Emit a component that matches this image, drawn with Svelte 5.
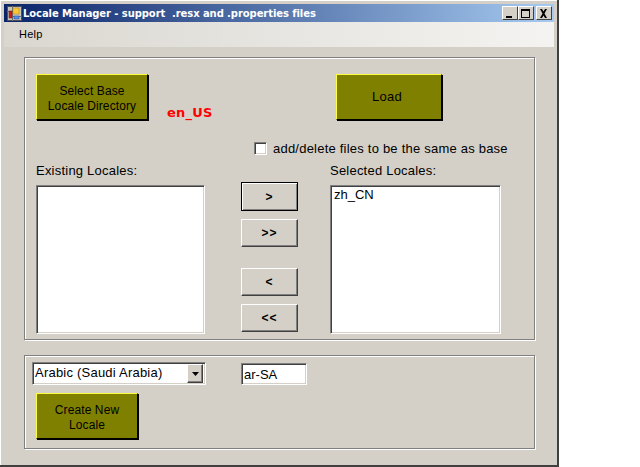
<script lang="ts">
  const title = "Locale Manager - support  .resx and .properties files";
</script>

<div class="page">
  <div class="window">
    <div class="titlebar">
      <svg class="app-icon" width="15" height="15" viewBox="0 0 15 15" aria-hidden="true">
        <rect x="0.5" y="0.5" width="14" height="14" fill="#c8c4b8" stroke="#505050" />
        <path d="M0 5.500h5M5.500 0v15M5.500 10.500h9" stroke="#707070" />
        <rect x="2" y="5" width="3" height="7" fill="#c82018" stroke="#701010" stroke-width="0.5" />
        <rect x="6" y="2" width="6" height="6" fill="#f8c838" stroke="#a88010" stroke-width="0.5" />
        <rect x="7" y="10" width="5" height="3" fill="#5890e8" stroke="#204890" stroke-width="0.5" />
      </svg>
      <span class="title">{title}</span>
      <div class="caption-buttons">
        <button class="caption" aria-label="Minimize">
          <svg width="10" height="9" viewBox="0 0 10 9"><rect x="1" y="7" width="6" height="2" fill="#000" /></svg>
        </button>
        <button class="caption" aria-label="Maximize">
          <svg width="10" height="9" viewBox="0 0 10 9"><path d="M0 0h9v9H0zM1 2v6h7V2z" fill="#000" fill-rule="evenodd" /></svg>
        </button>
        <button class="caption close" aria-label="Close">
          <svg width="10" height="9" viewBox="0 0 10 9"><path d="M1 0h2l1.500 2.500L6 0h2L5.500 4.500 8 9H6L4.500 6.500 3 9H1l2.500-4.500z" fill="#000" /></svg>
        </button>
      </div>
    </div>

    <div class="menubar"><span>Help</span></div>

    <div class="body">
      <section class="group main">
        <div class="top-row">
          <div class="base">
            <button class="olive select">Select Base<br />Locale Directory</button>
            <span class="base-locale">en_US</span>
          </div>
          <button class="olive load">Load</button>
        </div>

        <label class="sync">
          <span class="check sunken"></span>
          add/delete files to be the same as base
        </label>

        <div class="lists">
          <div class="col left">
            <div class="cap">Existing Locales:</div>
            <div class="listbox sunken"></div>
          </div>
          <div class="moves">
            <button class="move first"><span>&gt;</span></button>
            <button class="move"><span>&gt;&gt;</span></button>
            <button class="move gap"><span>&lt;</span></button>
            <button class="move"><span>&lt;&lt;</span></button>
          </div>
          <div class="col right">
            <div class="cap">Selected Locales:</div>
            <div class="listbox sunken"><div class="item">zh_CN</div></div>
          </div>
        </div>
      </section>

      <section class="group create">
        <div class="create-row">
          <div class="combo sunken">
            <span class="combo-value">Arabic (Saudi Arabia)</span>
            <span class="combo-arrow">
              <svg width="7" height="4" viewBox="0 0 7 4"><path d="M0 0h7L3.500 4z" fill="#000" /></svg>
            </span>
          </div>
          <div class="code sunken">ar-SA</div>
        </div>
        <button class="olive new">Create New<br />Locale</button>
      </section>
    </div>
  </div>
</div>

<style>
  :global(body) {
    margin: 0;
    background: #fff;
  }

  .page {
    width: 640px;
    height: 467px;
    overflow: hidden;
    font-family: "Liberation Sans", Arial, sans-serif;
    font-size: 13px;
    letter-spacing: 0.22px;
    color: #000;
  }

  .window {
    box-sizing: border-box;
    width: 559px;
    height: 467px;
    padding: 4px 3px 0 4px;
    background: #d4d0c8;
    border-right: 2px solid #404040;
    border-bottom: 2px solid #404040;
    box-shadow: inset 1px 1px 0 #fff;
    display: flex;
    flex-direction: column;
  }

  .titlebar {
    height: 18px;
    flex-shrink: 0;
    display: flex;
    align-items: center;
    background: linear-gradient(to right, #0a246a, #a6caf0);
    color: #fff;
  }

  .app-icon {
    margin: 0 1px 0 3px;
    flex-shrink: 0;
  }

  .title {
    white-space: pre;
    font-family: "DejaVu Sans", sans-serif;
    font-weight: bold;
    font-size: 10px;
    letter-spacing: -0.08px;
  }

  .caption-buttons {
    margin-left: auto;
    margin-right: 2px;
    display: flex;
  }

  .caption {
    width: 16px;
    height: 14px;
    padding: 0;
    display: flex;
    align-items: center;
    justify-content: center;
    background: #d4d0c8;
    border: 1px solid;
    border-color: #fff #404040 #404040 #fff;
  }

  .caption.close {
    margin-left: 2px;
  }

  .menubar {
    height: 25px;
    flex-shrink: 0;
    box-sizing: border-box;
    padding: 6px 0 0 15px;
    font-size: 11px;
    background: linear-gradient(to right, #dad7d0, #f4f3f1);
  }

  .body {
    padding: 10px 0 0 20px;
  }

  .group {
    box-sizing: border-box;
    width: 511px;
    border: 1px solid #808080;
    box-shadow: 1px 1px 0 #fff, inset 1px 1px 0 #fff;
    padding-left: 11px;
  }

  .main {
    height: 283px;
    padding-top: 16px;
  }

  .create {
    height: 94px;
    margin-top: 15px;
    padding-top: 6px;
    padding-left: 7px;
  }

  .sunken {
    box-sizing: border-box;
    background: #fff;
    border: 1px solid;
    border-color: #808080 #fff #fff #808080;
    box-shadow: inset 1px 1px 0 #404040, inset -1px -1px 0 #d4d0c8;
  }

  .top-row {
    display: flex;
    height: 46px;
  }

  .base {
    width: 300px;
    display: flex;
    align-items: flex-end;
  }

  .base-locale {
    margin-left: 19px;
    color: #f00;
    font-weight: bold;
    font-family: "DejaVu Sans", sans-serif;
    font-size: 13px;
    letter-spacing: 0.2px;
    line-height: 14px;
  }

  .olive {
    box-sizing: border-box;
    padding: 2px 0 0;
    font: inherit;
    font-size: 12px;
    line-height: 15px;
    letter-spacing: 0.1px;
    color: #000;
    background: #808000;
    border: 1px solid;
    border-color: #ffff40 #000 #000 #ffff40;
    box-shadow: 1px 1px 0 #000;
  }

  .select {
    width: 112px;
    height: 46px;
    padding-top: 4px;
    flex-shrink: 0;
  }

  .load {
    width: 106px;
    height: 46px;
    padding: 0 4px 2px 0;
    font-size: 13px;
    letter-spacing: 0.3px;
  }

  .sync {
    display: flex;
    align-items: center;
    height: 16px;
    margin: 20px 0 0 218px;
    white-space: nowrap;
  }

  .check {
    width: 13px;
    height: 13px;
    margin-right: 6px;
  }

  .lists {
    display: flex;
    margin-top: 7px;
  }

  .col {
    display: flex;
    flex-direction: column;
  }

  .col.left {
    width: 169px;
  }

  .col.right {
    width: 171px;
  }

  .cap {
    height: 15px;
    line-height: 15px;
    margin-bottom: 7px;
  }

  .listbox {
    height: 149px;
  }

  .item {
    padding: 1px 0 0 3px;
    font-size: 13px;
    letter-spacing: 0;
    line-height: 15px;
  }

  .moves {
    width: 57px;
    margin: 19px 32px 0 36px;
    display: flex;
    flex-direction: column;
    gap: 8px;
  }

  .move {
    box-sizing: border-box;
    height: 28px;
    padding: 0;
    font-family: "Liberation Sans", Arial, sans-serif;
    font-weight: bold;
    font-size: 12px;
    letter-spacing: 1px;
    color: #000;
    background: #d4d0c8;
    border: 1px solid;
    border-color: #fff #404040 #404040 #fff;
    box-shadow: inset -1px -1px 0 #808080;
  }

  .move.first {
    height: 29px;
    border-color: #000;
    box-shadow: inset 1px 1px 0 #fff, inset -1px -1px 0 #808080;
  }

  .move.gap {
    margin-top: 13px;
  }

  .create-row {
    display: flex;
    align-items: flex-start;
  }

  .combo {
    width: 174px;
    height: 23px;
    display: flex;
    align-items: center;
    padding: 2px;
  }

  .combo-value {
    flex: 1;
    padding: 0 0 3px 0;
  }

  .combo-arrow {
    box-sizing: border-box;
    width: 16px;
    height: 19px;
    display: flex;
    align-items: center;
    justify-content: center;
    background: #d4d0c8;
    border: 1px solid;
    border-color: #fff #404040 #404040 #fff;
    box-shadow: inset -1px -1px 0 #808080;
  }

  .code {
    width: 66px;
    height: 22px;
    margin: 1px 0 0 35px;
    padding: 3px 0 0 2px;
    letter-spacing: 0;
  }

  .new {
    display: block;
    width: 102px;
    height: 46px;
    margin: 8px 0 0 4px;
    padding-top: 4px;
  }
</style>
